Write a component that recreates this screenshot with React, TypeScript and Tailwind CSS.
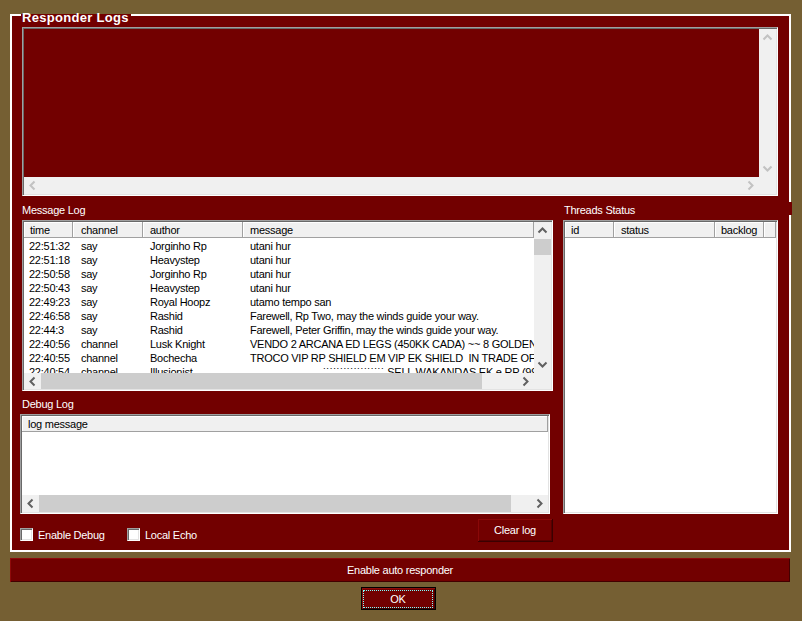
import React from "react";

type Dir = "up" | "down" | "left" | "right";

const PATHS: Record<Dir, string> = {
  up: "M4.5 10.5 L8.5 6.5 L12.5 10.5",
  down: "M4.5 6.5 L8.5 10.5 L12.5 6.5",
  left: "M10.5 4.5 L6.5 8.5 L10.5 12.5",
  right: "M6.5 4.5 L10.5 8.5 L6.5 12.5",
};

function Arrow({ dir, dim }: { dir: Dir; dim?: boolean }) {
  return (
    <div className="w-[17px] h-[17px] shrink-0">
      <svg width="17" height="17" viewBox="0 0 17 17" className="block">
        <path d={PATHS[dir]} fill="none" stroke={dim ? "#c2c2c2" : "#606060"} strokeWidth="2" />
      </svg>
    </div>
  );
}

const SUNKEN =
  "border [border-color:#a0a0a0_#ffffff_#ffffff_#a0a0a0] p-px shadow-[inset_1px_1px_0_#696969,inset_-1px_-1px_0_#e3e3e3]";

const HEAD =
  "shrink-0 h-[16px] pt-[2px] leading-[13px] bg-[#f0f0f0] border-r border-b [border-color:#a0a0a0] shadow-[inset_1px_1px_0_#ffffff] overflow-hidden whitespace-pre text-black";

const MSG_COLS = [
  { w: "w-[49px]", pl: "pl-[5px]", hpl: "pl-[6px]", label: "time" },
  { w: "w-[70px]", pl: "pl-[8px]", hpl: "pl-[8px]", label: "channel" },
  { w: "w-[100px]", pl: "pl-[7px]", hpl: "pl-[7px]", label: "author" },
  { w: "w-[291px]", pl: "pl-[7px]", hpl: "pl-[7px]", label: "message" },
];

const ROWS: string[][] = [
  ["22:51:32", "say", "Jorginho Rp", "utani hur"],
  ["22:51:18", "say", "Heavystep", "utani hur"],
  ["22:50:58", "say", "Jorginho Rp", "utani hur"],
  ["22:50:43", "say", "Heavystep", "utani hur"],
  ["22:49:23", "say", "Royal Hoopz", "utamo tempo san"],
  ["22:46:58", "say", "Rashid", "Farewell, Rp Two, may the winds guide your way."],
  ["22:44:3", "say", "Rashid", "Farewell, Peter Griffin, may the winds guide your way."],
  ["22:40:56", "channel", "Lusk Knight", "VENDO 2 ARCANA ED LEGS (450KK CADA) ~~ 8 GOLDEN LEGS"],
  ["22:40:55", "channel", "Bochecha", "TROCO VIP RP SHIELD EM VIP EK SHIELD  IN TRADE OF"],
  ["22:40:54", "channel", "Illusionist", "                          ˙˙˙˙˙˙˙˙˙˙˙˙˙˙˙˙˙˙ SELL WAKANDAS EK e RP (99)"],
];

function Checkbox() {
  return (
    <div className="w-[13px] h-[13px] shrink-0 bg-white border [border-color:#a0a0a0_#ffffff_#ffffff_#a0a0a0] shadow-[inset_1px_1px_0_#696969,inset_-1px_-1px_0_#e3e3e3]" />
  );
}

export default function App() {
  return (
    <div className="relative w-[802px] h-[621px] overflow-hidden bg-[#755f33] pt-[5px] pl-[10px] font-['Liberation_Sans',Arial,sans-serif] text-[11px] tracking-[-0.25px] text-white">
      <fieldset className="w-[781px] min-w-0 m-0 p-0 pb-[8px] border-2 border-white bg-[#720000]">
        <legend className="ml-[9px] pl-[1px] pr-[2px] pt-[6px] leading-[14px] text-[13px] font-bold tracking-[0.3px] text-white">
          Responder Logs
        </legend>

        {/* top responder log box */}
        <div className={`ml-[10px] mt-[2px] w-[756px] h-[169px] flex flex-col ${SUNKEN}`}>
          <div className="flex flex-1 min-h-0">
            <div className="flex-1 bg-[#720000]" />
            <div className="w-[17px] bg-[#f0f0f0] flex flex-col justify-between">
              <Arrow dir="up" dim />
              <Arrow dir="down" dim />
            </div>
          </div>
          <div className="h-[17px] shrink-0 flex bg-[#f0f0f0]">
            <Arrow dir="left" dim />
            <div className="flex-1" />
            <Arrow dir="right" dim />
            <div className="w-[17px] shrink-0" />
          </div>
        </div>

        <div className="mt-[7px] flex">
          {/* left column */}
          <div className="ml-[8px] w-[533px] flex flex-col">
            <div className="ml-[2px] leading-[14px]">Message Log</div>
            <div className={`ml-[2px] mt-[3px] w-[531px] h-[171px] flex flex-col bg-white ${SUNKEN}`}>
              <div className="flex flex-1 min-h-0">
                <div className="w-[510px] flex flex-col overflow-hidden">
                  <div className="flex h-[16px] shrink-0">
                    {MSG_COLS.map((c) => (
                      <div key={c.label} className={`${c.w} ${c.hpl} ${HEAD}`}>
                        {c.label}
                      </div>
                    ))}
                  </div>
                  <div className="pt-px">
                    {ROWS.map((r, i) => (
                      <div key={i} className="flex h-[14px] leading-[14px] text-black">
                        {r.map((cell, j) => (
                          <div
                            key={j}
                            className={`${MSG_COLS[j].w} ${MSG_COLS[j].pl} shrink-0 overflow-hidden whitespace-pre`}
                          >
                            {cell}
                          </div>
                        ))}
                      </div>
                    ))}
                  </div>
                </div>
                <div className="w-[17px] shrink-0 bg-[#f0f0f0] flex flex-col">
                  <Arrow dir="up" />
                  <div className="h-[16px] bg-[#cdcdcd]" />
                  <div className="flex-1" />
                  <Arrow dir="down" />
                </div>
              </div>
              <div className="h-[16px] shrink-0 flex items-center bg-[#f0f0f0]">
                <Arrow dir="left" />
                <div className="w-[441px] h-[16px] bg-[#cdcdcd]" />
                <div className="flex-1" />
                <Arrow dir="right" />
                <div className="w-[17px] shrink-0" />
              </div>
            </div>

            <div className="ml-[2px] mt-[6px] leading-[14px]">Debug Log</div>
            <div className={`mt-[3px] w-[530px] h-[100px] flex flex-col bg-white ${SUNKEN}`}>
              <div className={`w-full pl-[6px] ${HEAD}`}>log message</div>
              <div className="flex-1" />
              <div className="h-[17px] shrink-0 flex bg-[#f0f0f0]">
                <Arrow dir="left" />
                <div className="w-[472px] bg-[#cdcdcd]" />
                <div className="flex-1" />
                <Arrow dir="right" />
              </div>
            </div>

            <div className="mt-[5px] h-[23px] flex justify-between">
              <div className="mt-[9px] h-[13px] flex items-center">
                <div className="w-[107px] flex items-center">
                  <Checkbox />
                  <span className="ml-[5px] leading-[13px] pt-px">Enable Debug</span>
                </div>
                <div className="flex items-center">
                  <Checkbox />
                  <span className="ml-[5px] leading-[13px] pt-px">Local Echo</span>
                </div>
              </div>
              <div className="w-[75px] h-[23px] bg-[#3a0000] pr-px pb-px">
                <div className="h-full bg-[#8a0808] pl-px pt-px">
                  <div className="h-full bg-[#560000] pr-px pb-px">
                    <div className="h-full bg-[#720000] flex items-center justify-center">Clear log</div>
                  </div>
                </div>
              </div>
            </div>
          </div>

          {/* right column */}
          <div className="ml-[10px] w-[215px] flex flex-col">
            <div className="ml-[1px] leading-[14px]">Threads Status</div>
            <div className={`mt-[3px] w-[215px] h-[294px] flex flex-col bg-white ${SUNKEN}`}>
              <div className="flex h-[16px] shrink-0">
                <div className={`w-[49px] pl-[6px] ${HEAD}`}>id</div>
                <div className={`w-[101px] pl-[7px] ${HEAD}`}>status</div>
                <div className={`w-[49px] pl-[6px] ${HEAD}`}>backlog</div>
                <div className={`w-[12px] ${HEAD}`} />
              </div>
            </div>
          </div>
        </div>
      </fieldset>

      {/* small red tab overlapping the frame's right edge */}
      <div className="absolute left-[789px] top-[202px] w-[3px] h-[13px] bg-[#720000]" />

      <div className="mt-[6px] w-[780px] h-[24px] bg-[#720000] shadow-[inset_1px_1px_0_#8e0a0a,inset_-1px_-1px_0_#420000] flex items-center justify-center">
        Enable auto responder
      </div>

      <div className="ml-[351px] mt-[5px] w-[75px] h-[23px] bg-[#720000] border border-black pt-[2px] pl-[1px] pr-[2px] pb-[1px] shadow-[inset_1px_1px_0_#8e0a0a,inset_-1px_-1px_0_#420000]">
        <div className="h-full border border-dotted border-[#7fffff] flex items-center justify-center">
          OK
        </div>
      </div>
    </div>
  );
}
